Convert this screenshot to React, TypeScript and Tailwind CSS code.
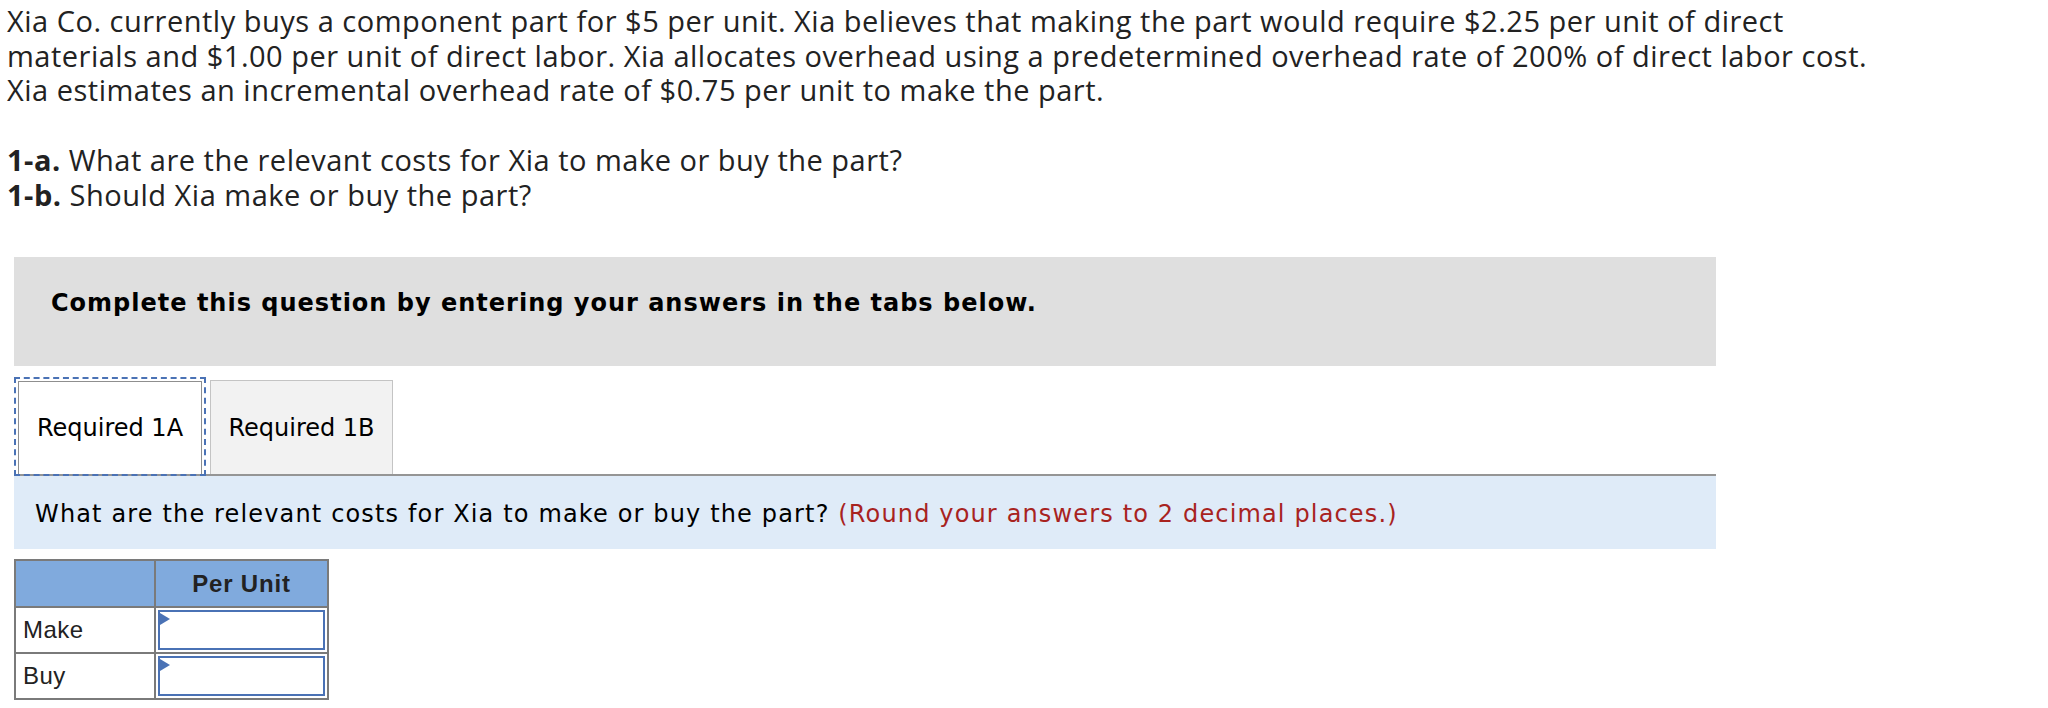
import React from "react";

const body = "font-['Open_Sans','Lato',sans-serif]";
const verdana = "font-['DejaVu_Sans','Verdana',sans-serif]";
const arial = "font-['Liberation_Sans','Arial',sans-serif]";

const AnswerCell = () => (
  <td className="p-0 border-2 border-[#7a7a7a] h-[46px]">
    <div className="relative h-full p-[2px]">
      <input
        type="text"
        className="block w-full h-[40px] border-2 border-[#4a72b5] bg-white outline-none px-2"
      />
      <span className="absolute left-[4px] top-[5px] w-0 h-0 border-y-[6px] border-y-transparent border-l-[10px] border-l-[#4a72b5]" />
    </div>
  </td>
);

const App = () => {
  return (
    <div className="bg-white min-h-[708px] w-[2048px] text-[#222]">
      <div className={`${body} text-[29px] leading-[34.7px] tracking-[0.5px] pl-[7px] pt-[4px]`}>
        <p>
          Xia Co. currently buys a component part for $5 per unit. Xia believes that making the part would require $2.25 per unit of direct
          <br />
          materials and $1.00 per unit of direct labor. Xia allocates overhead using a predetermined overhead rate of 200% of direct labor cost.
          <br />
          Xia estimates an incremental overhead rate of $0.75 per unit to make the part.
        </p>
        <br />
        <p>
          <b>1-a.</b> What are the relevant costs for Xia to make or buy the part?
          <br />
          <b>1-b.</b> Should Xia make or buy the part?
        </p>
      </div>

      <div className="ml-[14px] w-[1702px] mt-[45px]">
        <div className="h-[109px] bg-[#dfdfdf] flex items-center pl-[37px] pb-[18px]">
          <h2 className={`${verdana} font-bold text-[24px] tracking-[1px] text-black`}>
            Complete this question by entering your answers in the tabs below.
          </h2>
        </div>

        {/* tabs */}
        <div className="mt-[13px] flex items-end border-b-2 border-[#959595] h-[97px]">
          <div className="relative h-[99px] w-[192px] border-2 border-dashed border-[#4a72b5] -mb-[2px] p-[2px] pb-0 z-10">
            <button className={`${verdana} h-full w-full border border-[#8f8f8f] border-b-0 bg-white text-[24px] text-black`}>
              Required 1A
            </button>
          </div>
          <button className={`${verdana} h-[94px] w-[183px] ml-[4px] border border-[#c4c4c4] border-b-0 bg-[#f2f2f2] text-[24px] text-black`}>
            Required 1B
          </button>
        </div>

        <div className={`${verdana} h-[73px] bg-[#dfebf8] flex items-center pl-[21px] pt-[2px] text-[24px] tracking-[1.15px] text-black`}>
          <p>
            What are the relevant costs for Xia to make or buy the part?{" "}
            <span className="text-[#a8231f]">(Round your answers to 2 decimal places.)</span>
          </p>
        </div>

        <table className={`${arial} mt-[10px] border-collapse border-2 border-[#7a7a7a] text-[24px] tracking-[0.5px] text-[#222]`}>
          <thead>
            <tr className="bg-[#80aadd] h-[47px]">
              <th className="w-[140px] border-2 border-[#7a7a7a]" />
              <th className="w-[173px] border-2 border-[#7a7a7a] font-bold tracking-[0.8px] text-[#222]">Per Unit</th>
            </tr>
          </thead>
          <tbody>
            <tr>
              <td className="border-2 border-[#7a7a7a] pl-[7px] h-[46px]">Make</td>
              <AnswerCell />
            </tr>
            <tr>
              <td className="border-2 border-[#7a7a7a] pl-[7px] h-[46px]">Buy</td>
              <AnswerCell />
            </tr>
          </tbody>
        </table>
      </div>
    </div>
  );
};

export default App;
